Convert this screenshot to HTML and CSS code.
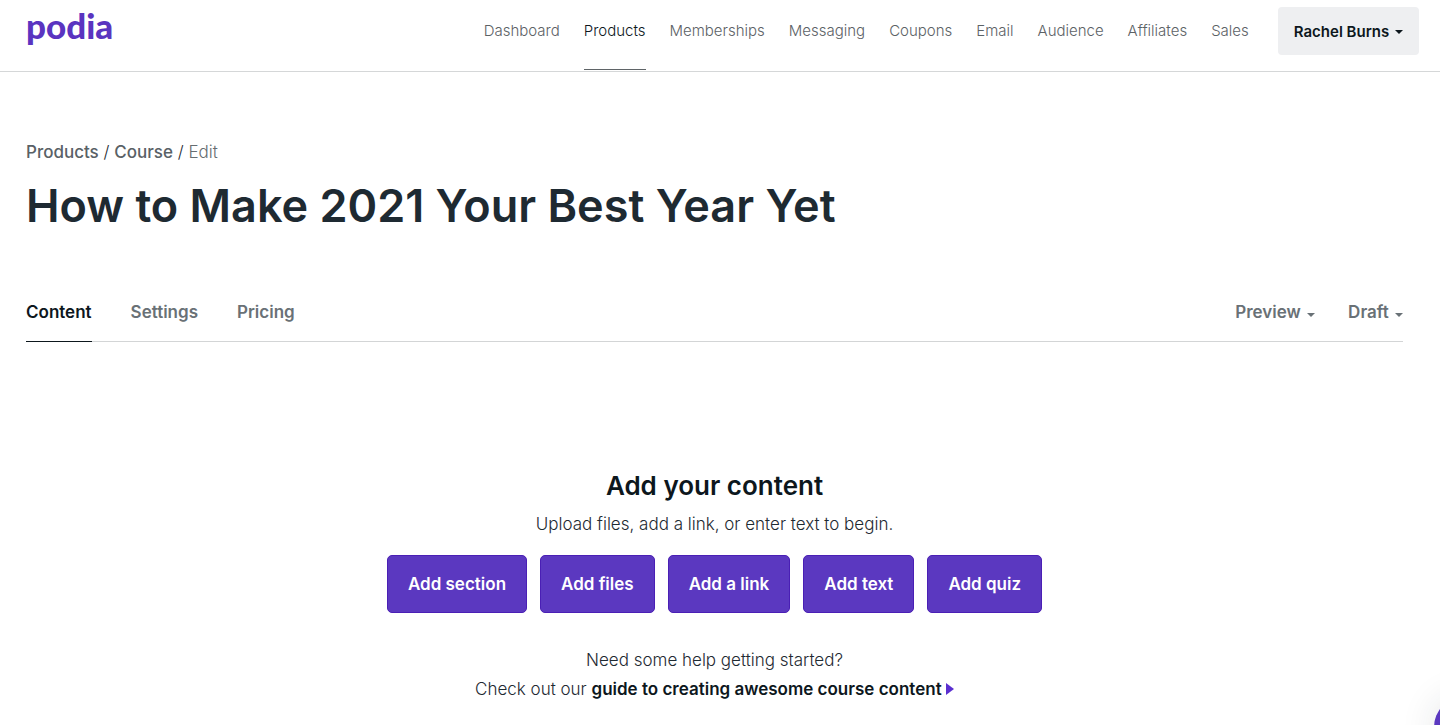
FILE: index.html
```html
<!DOCTYPE html>
<html lang="en">
<head>
  <meta charset="UTF-8">
  <meta name="viewport" content="width=device-width, initial-scale=1.0">
  <title>How to Make 2021 Your Best Year Yet - Podia</title>
  <link rel="stylesheet" href="styles.css">
</head>
<body>

<header class="header">
  <a class="logo" href="#">podia</a>
  <nav class="nav">
    <a href="#">Dashboard</a>
    <a class="active" href="#">Products</a>
    <a href="#">Memberships</a>
    <a href="#">Messaging</a>
    <a href="#">Coupons</a>
    <a href="#">Email</a>
    <a href="#">Audience</a>
    <a href="#">Affiliates</a>
    <a href="#">Sales</a>
  </nav>
  <button class="account" type="button">Rachel Burns <span class="caret"></span></button>
</header>

<main class="main">
  <nav class="breadcrumb">
    <a href="#">Products</a> / <a href="#">Course</a> / <span>Edit</span>
  </nav>
  <h1>How to Make 2021 Your Best Year Yet</h1>

  <div class="tabs">
    <a class="tab active" href="#">Content</a>
    <a class="tab" href="#">Settings</a>
    <a class="tab" href="#">Pricing</a>
    <div class="tab-actions">
      <button class="tab" type="button">Preview <span class="caret"></span></button>
      <button class="tab" type="button">Draft <span class="caret"></span></button>
    </div>
  </div>

  <section class="empty">
    <h2>Add your content</h2>
    <p>Upload files, add a link, or enter text to begin.</p>
    <div class="buttons">
      <button class="btn" type="button">Add section</button>
      <button class="btn" type="button">Add files</button>
      <button class="btn" type="button">Add a link</button>
      <button class="btn" type="button">Add text</button>
      <button class="btn" type="button">Add quiz</button>
    </div>
    <p>Need some help getting started?</p>
    <p>Check out our <a class="guide" href="#">guide to creating awesome course content <span class="arrow"></span></a></p>
  </section>
</main>

<button class="chat" type="button" aria-label="Help"></button>

</body>
</html>
```
FILE: styles.css
```css
* {
  box-sizing: border-box;
}

body {
  margin: 0;
  font-family: Inter, "Liberation Sans", sans-serif;
  font-size: 16px;
  color: #1e2a32;
  background: #fff;
}

a {
  color: inherit;
  text-decoration: none;
}

button {
  font-family: inherit;
  border: 0;
  cursor: pointer;
}

/* header */
.header {
  display: flex;
  align-items: flex-start;
  height: 72px;
  padding: 0 21px 0 26px;
  border-bottom: 1px solid #d5d7d8;
}

.logo {
  margin-right: auto;
  padding-top: 5px;
  font-family: Lato, sans-serif;
  font-size: 35px;
  font-weight: 900;
  line-height: 40px;
  color: #5a34c0;
}

.nav {
  display: flex;
  gap: 24px;
  margin-right: 29px;
  font-size: 15px;
  font-weight: 300;
  line-height: 62px;
  color: #5c6266;
}

.nav a {
  height: 70px;
}

.nav .active {
  color: #0d171d;
  border-bottom: 1px solid #5f6467;
}

.account {
  height: 48px;
  margin-top: 7px;
  padding: 0 16px;
  border-radius: 4px;
  background: #eeeff1;
  color: #0d171d;
  font-size: 15px;
  font-weight: 600;
}

.caret {
  display: inline-block;
  margin-left: 2px;
  border: 4px solid transparent;
  border-top-color: currentColor;
  border-bottom: 0;
  vertical-align: 3px;
}

/* page */
.main {
  padding: 70px 37px 0 26px;
}

.breadcrumb {
  font-size: 17px;
  font-weight: 300;
  line-height: 20px;
}

.breadcrumb a {
  font-weight: 500;
  color: #596166;
}

.breadcrumb span {
  color: #666d71;
}

h1 {
  margin: 16px 0 0;
  font-size: 45px;
  font-weight: 600;
  line-height: 56px;
}

.tabs {
  display: flex;
  gap: 39px;
  margin-top: 48px;
  border-bottom: 1px solid #d3d5d6;
}

.tab {
  height: 60px;
  margin-bottom: -1px;
  padding: 0;
  background: none;
  color: #697176;
  font-size: 17px;
  font-weight: 600;
  line-height: 60px;
}

.tab.active {
  color: #0d171d;
  border-bottom: 1px solid #0d171d;
}

.tab-actions {
  display: flex;
  gap: 33px;
  margin-left: auto;
}

.tab-actions .caret {
  vertical-align: 1px;
}

.empty {
  padding-top: 125px;
  text-align: center;
}

.empty h2 {
  margin: 0 0 5px;
  font-size: 26px;
  font-weight: 600;
  line-height: 38px;
  color: #0d171d;
}

.empty p {
  margin: 0;
  font-size: 17px;
  font-weight: 300;
  line-height: 29px;
}

.buttons {
  display: flex;
  justify-content: center;
  gap: 13px;
  margin: 16px 0 33px;
}

.btn {
  height: 58px;
  padding: 0 20px;
  border: 1px solid #4a1fb5;
  border-radius: 5px;
  background: #5b38c0;
  color: #fff;
  font-size: 17px;
  font-weight: 600;
}

.empty .guide {
  font-weight: 600;
  color: #0d171d;
}

.arrow {
  display: inline-block;
  border: 6px solid transparent;
  border-left: 8px solid #5a2fd0;
  border-right: 0;
}

/* chat bubble, hangs over the corner */
.chat {
  position: fixed;
  right: -54px;
  bottom: -32px;
  width: 60px;
  height: 60px;
  border-radius: 50%;
  background: #5b38c0;
  box-shadow: 0 0 36px rgba(30, 42, 50, 0.12);
}
```
